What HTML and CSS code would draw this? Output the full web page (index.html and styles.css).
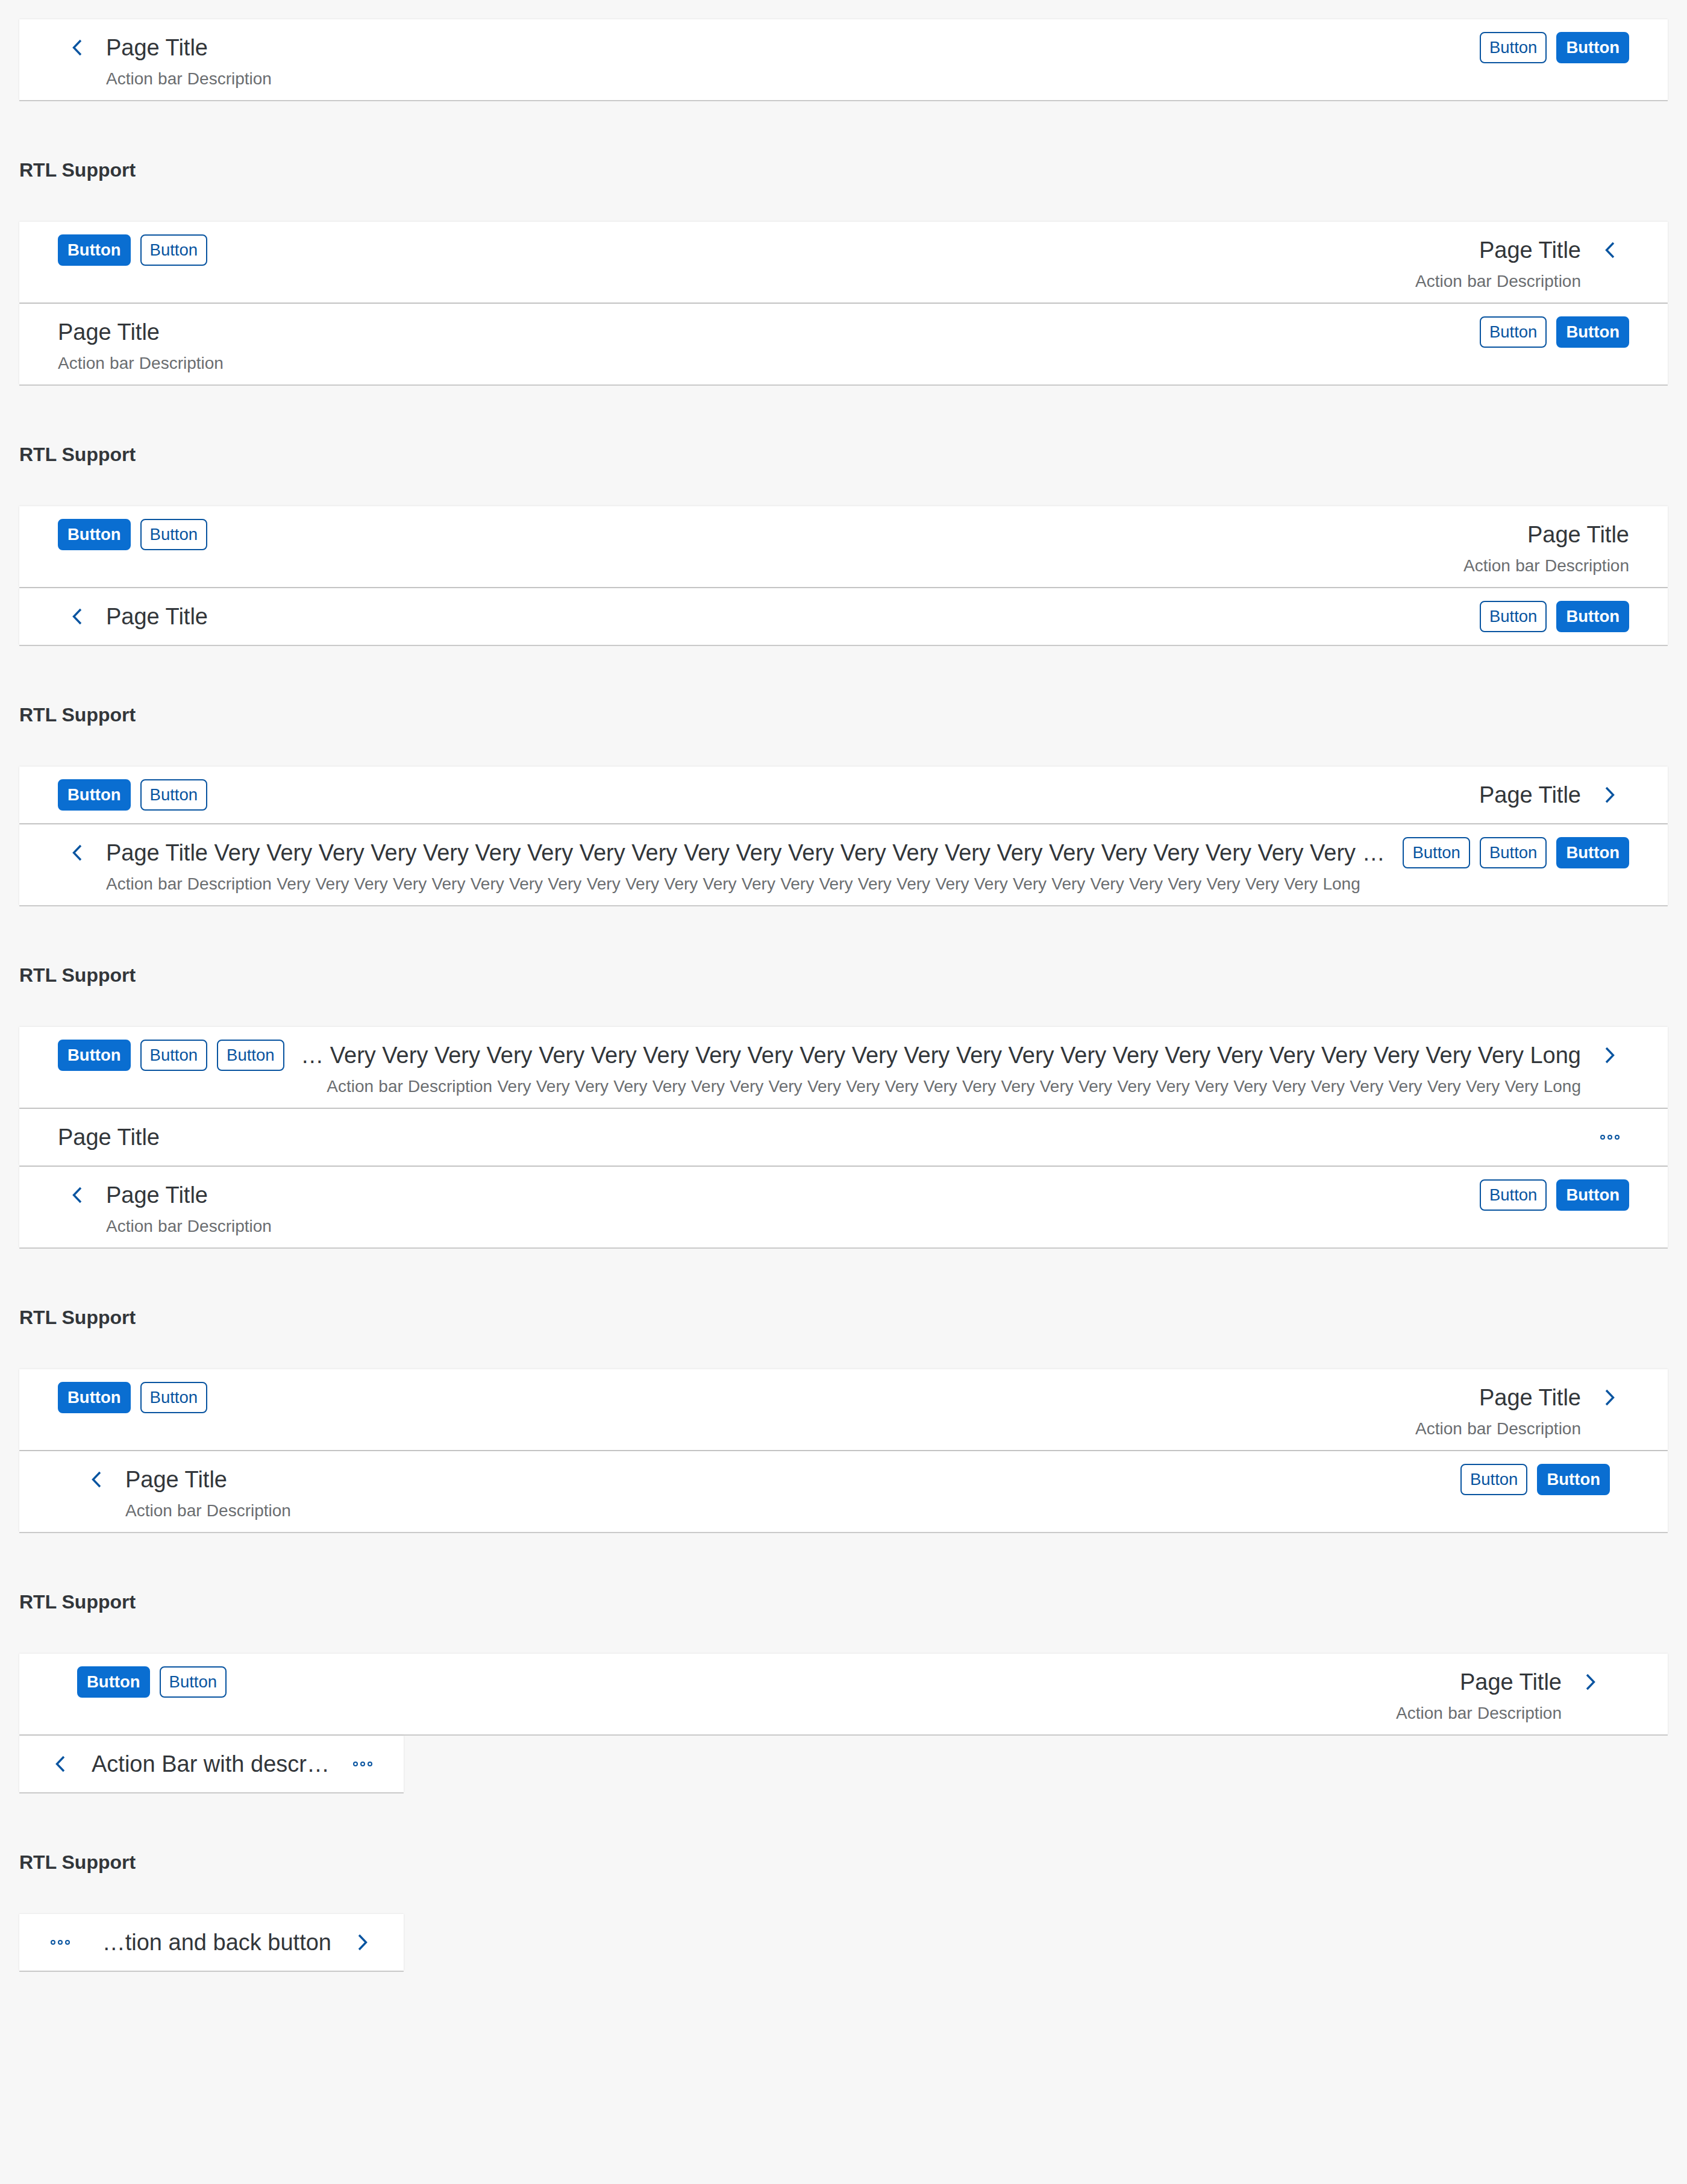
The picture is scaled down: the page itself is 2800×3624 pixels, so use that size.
FILE: index.html
```html
<!DOCTYPE html>
<html lang="en">
<head>
<meta charset="utf-8">
<title>Action Bar</title>
<link rel="stylesheet" href="styles.css">
</head>
<body>
<main class="page">

  <div class="stack">
    <div class="bar">
      <span class="icon-btn back"><svg width="18" height="28" viewBox="0 0 18 28"><path d="M15 2 L3.5 14 L15 26" /></svg></span>
      <div class="header">
        <div class="title">Page Title</div>
        <div class="desc">Action bar Description</div>
      </div>
      <div class="actions"><button class="btn">Button</button><button class="btn btn--emph">Button</button></div>
    </div>
  </div>

  <h3 class="section-title">RTL Support</h3>
  <div class="stack">
    <div class="bar rtl">
      <span class="icon-btn back"><svg width="18" height="28" viewBox="0 0 18 28"><path d="M15 2 L3.5 14 L15 26" /></svg></span>
      <div class="header">
        <div class="title">Page Title</div>
        <div class="desc">Action bar Description</div>
      </div>
      <div class="actions"><button class="btn">Button</button><button class="btn btn--emph">Button</button></div>
    </div>
    <div class="bar">
      <div class="header">
        <div class="title">Page Title</div>
        <div class="desc">Action bar Description</div>
      </div>
      <div class="actions"><button class="btn">Button</button><button class="btn btn--emph">Button</button></div>
    </div>
  </div>

  <h3 class="section-title">RTL Support</h3>
  <div class="stack">
    <div class="bar rtl">
      <div class="header">
        <div class="title">Page Title</div>
        <div class="desc">Action bar Description</div>
      </div>
      <div class="actions"><button class="btn">Button</button><button class="btn btn--emph">Button</button></div>
    </div>
    <div class="bar">
      <span class="icon-btn back"><svg width="18" height="28" viewBox="0 0 18 28"><path d="M15 2 L3.5 14 L15 26" /></svg></span>
      <div class="header">
        <div class="title">Page Title</div>
      </div>
      <div class="actions"><button class="btn">Button</button><button class="btn btn--emph">Button</button></div>
    </div>
  </div>

  <h3 class="section-title">RTL Support</h3>
  <div class="stack">
    <div class="bar rtl">
      <span class="icon-btn back"><svg width="18" height="28" viewBox="0 0 18 28"><path d="M3 2 L14.5 14 L3 26" /></svg></span>
      <div class="header">
        <div class="title">Page Title</div>
      </div>
      <div class="actions"><button class="btn">Button</button><button class="btn btn--emph">Button</button></div>
    </div>
    <div class="bar">
      <span class="icon-btn back"><svg width="18" height="28" viewBox="0 0 18 28"><path d="M15 2 L3.5 14 L15 26" /></svg></span>
      <div class="header">
        <div class="title">Page Title Very Very Very Very Very Very Very Very Very Very Very Very Very Very Very Very Very Very Very Very Very Very Very Very Very Very Very Long</div>
        <div class="desc">Action bar Description Very Very Very Very Very Very Very Very Very Very Very Very Very Very Very Very Very Very Very Very Very Very Very Very Very Very Very Long</div>
      </div>
      <div class="actions"><button class="btn">Button</button><button class="btn">Button</button><button class="btn btn--emph">Button</button></div>
    </div>
  </div>

  <h3 class="section-title">RTL Support</h3>
  <div class="stack">
    <div class="bar rtl">
      <span class="icon-btn back"><svg width="18" height="28" viewBox="0 0 18 28"><path d="M3 2 L14.5 14 L3 26" /></svg></span>
      <div class="header">
        <div class="title">Page Title Very Very Very Very Very Very Very Very Very Very Very Very Very Very Very Very Very Very Very Very Very Very Very Very Very Very Very Long</div>
        <div class="desc">Action bar Description Very Very Very Very Very Very Very Very Very Very Very Very Very Very Very Very Very Very Very Very Very Very Very Very Very Very Very Long</div>
      </div>
      <div class="actions"><button class="btn">Button</button><button class="btn">Button</button><button class="btn btn--emph">Button</button></div>
    </div>
    <div class="bar">
      <div class="header">
        <div class="title">Page Title</div>
      </div>
      <div class="actions"><span class="icon-btn"><svg width="32" height="8" viewBox="0 0 32 8"><circle cx="4" cy="4" r="3"/><circle cx="16" cy="4" r="3"/><circle cx="28" cy="4" r="3"/></svg></span></div>
    </div>
    <div class="bar">
      <span class="icon-btn back"><svg width="18" height="28" viewBox="0 0 18 28"><path d="M15 2 L3.5 14 L15 26" /></svg></span>
      <div class="header">
        <div class="title">Page Title</div>
        <div class="desc">Action bar Description</div>
      </div>
      <div class="actions"><button class="btn">Button</button><button class="btn btn--emph">Button</button></div>
    </div>
  </div>

  <h3 class="section-title">RTL Support</h3>
  <div class="stack">
    <div class="bar rtl">
      <span class="icon-btn back"><svg width="18" height="28" viewBox="0 0 18 28"><path d="M3 2 L14.5 14 L3 26" /></svg></span>
      <div class="header">
        <div class="title">Page Title</div>
        <div class="desc">Action bar Description</div>
      </div>
      <div class="actions"><button class="btn">Button</button><button class="btn btn--emph">Button</button></div>
    </div>
    <div class="bar bar--l">
      <span class="icon-btn back"><svg width="18" height="28" viewBox="0 0 18 28"><path d="M15 2 L3.5 14 L15 26" /></svg></span>
      <div class="header">
        <div class="title">Page Title</div>
        <div class="desc">Action bar Description</div>
      </div>
      <div class="actions"><button class="btn">Button</button><button class="btn btn--emph">Button</button></div>
    </div>
  </div>

  <h3 class="section-title">RTL Support</h3>
  <div class="stack">
    <div class="bar bar--l rtl">
      <span class="icon-btn back"><svg width="18" height="28" viewBox="0 0 18 28"><path d="M3 2 L14.5 14 L3 26" /></svg></span>
      <div class="header">
        <div class="title">Page Title</div>
        <div class="desc">Action bar Description</div>
      </div>
      <div class="actions"><button class="btn">Button</button><button class="btn btn--emph">Button</button></div>
    </div>
    <div class="bar bar--s">
      <span class="icon-btn back"><svg width="18" height="28" viewBox="0 0 18 28"><path d="M15 2 L3.5 14 L15 26" /></svg></span>
      <div class="header">
        <div class="title">Action Bar with description and back button</div>
      </div>
      <div class="actions"><span class="icon-btn"><svg width="32" height="8" viewBox="0 0 32 8"><circle cx="4" cy="4" r="3"/><circle cx="16" cy="4" r="3"/><circle cx="28" cy="4" r="3"/></svg></span></div>
    </div>
  </div>

  <h3 class="section-title">RTL Support</h3>
  <div class="stack">
    <div class="bar bar--s rtl">
      <span class="icon-btn back"><svg width="18" height="28" viewBox="0 0 18 28"><path d="M3 2 L14.5 14 L3 26" /></svg></span>
      <div class="header">
        <div class="title">Action Bar with description and back button</div>
      </div>
      <div class="actions"><span class="icon-btn"><svg width="32" height="8" viewBox="0 0 32 8"><circle cx="4" cy="4" r="3"/><circle cx="16" cy="4" r="3"/><circle cx="28" cy="4" r="3"/></svg></span></div>
    </div>
  </div>

</main>
</body>
</html>
```

FILE: styles.css
```css
* {
  box-sizing: border-box;
}

html,
body {
  margin: 0;
}

body {
  background: #f7f7f7;
  font-family: "Liberation Sans", Arial, sans-serif;
  color: #32363a;
}

.page {
  display: flex;
  flex-direction: column;
  align-items: stretch;
  padding: 32px;
}

.stack {
  display: flex;
  flex-direction: column;
  align-items: flex-start;
  gap: 2px;
}

.section-title {
  margin: 96px 0 66px;
  font-size: 32px;
  line-height: 40px;
  font-weight: 700;
  color: #32363a;
}

.bar {
  display: flex;
  align-items: flex-start;
  align-self: stretch;
  background: #fff;
  padding: 15px 64px;
  box-shadow: 0 2px 0 0 rgba(0, 0, 0, 0.16), 0 0 3px 0 rgba(0, 0, 0, 0.1);
}

.bar--l {
  padding: 15px 96px;
}

.bar--s {
  align-self: flex-start;
  width: 638px;
  padding: 15px 32px;
}

.rtl {
  direction: rtl;
}

.icon-btn {
  flex: none;
  width: 64px;
  height: 64px;
  display: flex;
  align-items: center;
  justify-content: center;
  color: #0854a0;
}

.bar--s .icon-btn {
  width: 72px;
}

.icon-btn svg {
  display: block;
}

.icon-btn path {
  fill: none;
  stroke: currentColor;
  stroke-width: 3.4;
}

.icon-btn circle {
  fill: none;
  stroke: currentColor;
  stroke-width: 2;
}

.back {
  margin-inline-end: 16px;
}

.header {
  flex: 1 1 auto;
  min-width: 0;
}

.title {
  font-size: 38px;
  line-height: 64px;
  color: #32363a;
  white-space: nowrap;
  overflow: hidden;
  text-overflow: ellipsis;
}

.desc {
  font-size: 28px;
  line-height: 40px;
  word-spacing: 0.5px;
  color: #6a6d70;
  white-space: nowrap;
  overflow: hidden;
  text-overflow: ellipsis;
}

.actions {
  flex: none;
  height: 64px;
  display: flex;
  align-items: center;
  gap: 16px;
  margin-inline-start: 16px;
}

.btn {
  height: 52px;
  margin: 0;
  padding: 0 14px;
  border: 2px solid #0854a0;
  border-radius: 8px;
  background: #fff;
  color: #0854a0;
  font-family: "Liberation Sans", Arial, sans-serif;
  font-size: 27.5px;
  line-height: 48px;
  font-weight: 400;
}

.btn--emph {
  background: #0a6ed1;
  border-color: #0a6ed1;
  color: #fff;
  font-weight: 700;
}
```
